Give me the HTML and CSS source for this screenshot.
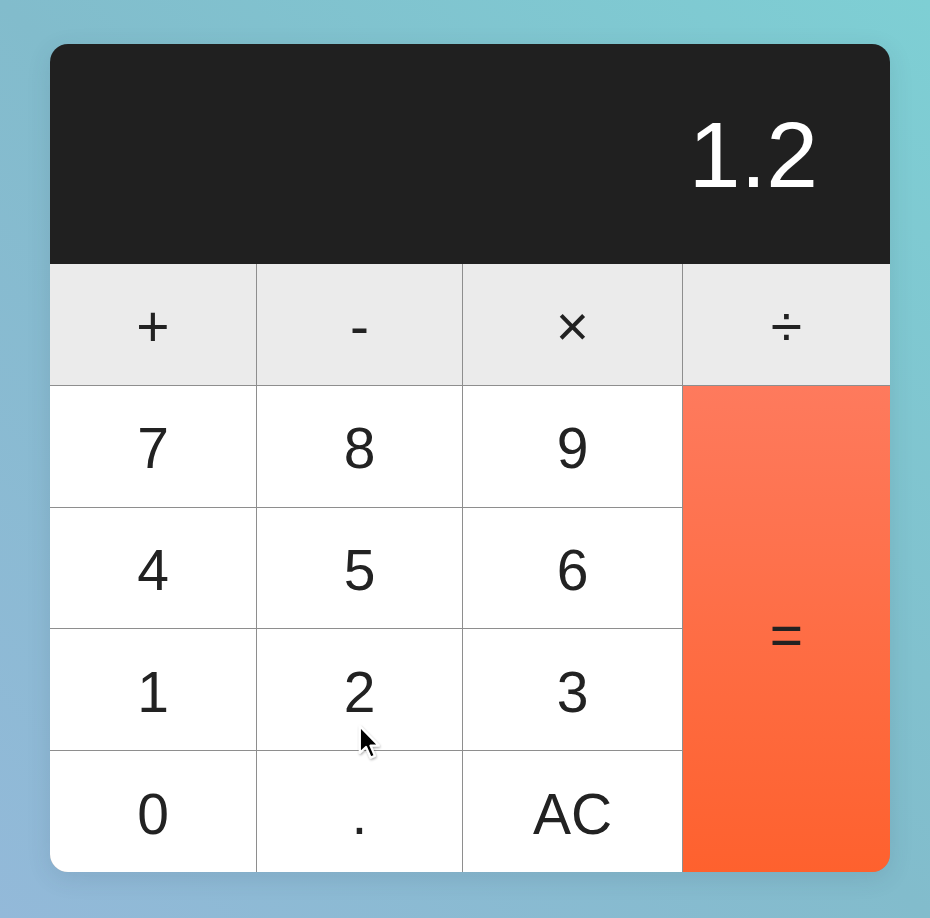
FILE: index.html
```html
<!DOCTYPE html>
<html lang="en">
<head>
<meta charset="utf-8">
<title>Calculator</title>
<link rel="stylesheet" href="styles.css">
</head>
<body>
<div class="calc">
  <div class="display">1.2</div>
  <div class="keys">
    <button class="key op">+</button>
    <button class="key op">-</button>
    <button class="key op">×</button>
    <button class="key op">÷</button>
    <button class="key">7</button>
    <button class="key">8</button>
    <button class="key">9</button>
    <button class="key equal">=</button>
    <button class="key">4</button>
    <button class="key">5</button>
    <button class="key">6</button>
    <button class="key">1</button>
    <button class="key">2</button>
    <button class="key">3</button>
    <button class="key">0</button>
    <button class="key">.</button>
    <button class="key">AC</button>
  </div>
</div>
<svg class="cursor" width="30" height="42" viewBox="0 0 26 38" aria-hidden="true">
  <defs>
    <filter id="cs" x="-30%" y="-30%" width="160%" height="160%">
      <feDropShadow dx="0.6" dy="1.2" stdDeviation="1" flood-color="#000" flood-opacity="0.35"/>
    </filter>
  </defs>
  <path d="M2 2 L2 26 L7.6 20.8 L11.8 30.4 L15.6 28.8 L11.6 19.6 L19 19.4 Z" fill="#000" stroke="#fff" stroke-width="2" stroke-linejoin="round" filter="url(#cs)"/>
</svg>
</body>
</html>
```
FILE: styles.css
```css
html, body {
  margin: 0;
  padding: 0;
}
body {
  width: 930px;
  height: 918px;
  background: linear-gradient(to top right, #93b9d9 0%, #82bccc 50%, #7ecfd4 100%);
  font-family: "Liberation Sans", Arial, sans-serif;
  padding-top: 44px;
  box-sizing: border-box;
  position: relative;
  overflow: hidden;
}
.calc {
  width: 840px;
  margin-left: 50px;
  border-radius: 18px;
  overflow: hidden;
  box-shadow: 0 6px 24px rgba(40, 60, 80, 0.12);
}
.display {
  height: 220px;
  background: #202020;
  color: #ffffff;
  font-size: 93px;
  display: flex;
  align-items: center;
  justify-content: flex-end;
  padding-right: 72px;
  box-sizing: border-box;
  padding-top: 2px;
}
.keys {
  display: grid;
  grid-template-columns: 206px 205px 219px 1fr;
  grid-template-rows: repeat(5, 1fr);
  gap: 1px;
  height: 608px;
  background: #8e8e8e;
}
.key {
  border: none;
  margin: 0;
  padding: 0;
  background: #ffffff;
  color: #222222;
  font-family: "Liberation Sans", Arial, sans-serif;
  font-size: 57px;
  display: flex;
  align-items: center;
  justify-content: center;
  padding-top: 4px;
}
.op {
  background: #ebebeb;
}
.equal {
  grid-column: 4;
  grid-row: 2 / span 4;
  background: linear-gradient(to bottom, #fe7a5d, #fe612e);
  padding-top: 12px;
}
.cursor {
  position: absolute;
  left: 357px;
  top: 724px;
}
```
